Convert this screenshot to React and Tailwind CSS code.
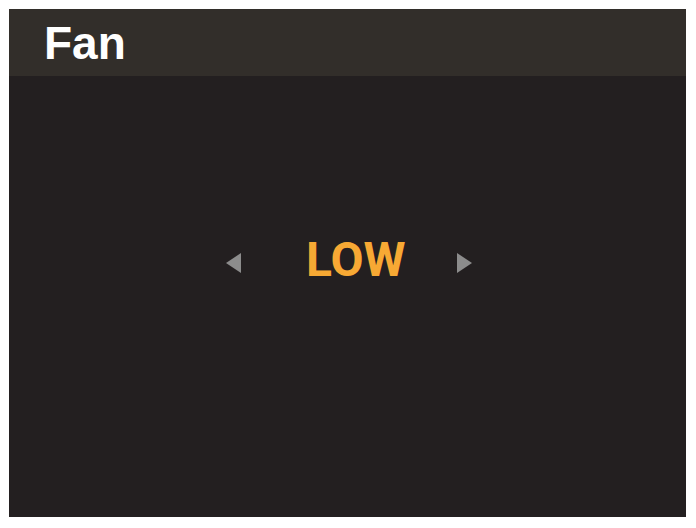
import React from 'react';

const App = () => {
    return (
        <div className="w-[696px] h-[528px] bg-white pt-[9px] pl-[9px] pr-[10px] pb-[11px]">
            <div className="flex h-full flex-col bg-[#231f20]">
                {/* header */}
                <div className="flex h-[67px] items-center bg-[#322e2a] pl-[35px]">
                    <h1 className="font-['Liberation_Sans',sans-serif] text-[46px] font-bold leading-none text-white">Fan</h1>
                </div>

                {/* value selector */}
                <div className="flex-1 pt-[159px]">
                    <div className="flex h-[56px] items-center pl-[217px]">
                        <svg width="15" height="20" viewBox="0 0 15 20" className="shrink-0">
                            <polygon points="15,0 15,20 0,10" fill="#8c8c8c" />
                        </svg>
                        <span className="mb-[6px] ml-[65px] font-['Roboto',sans-serif] text-[48px] font-bold leading-none text-[#f7a934]">LOW</span>
                        <svg width="15" height="20" viewBox="0 0 15 20" className="ml-[51px] shrink-0">
                            <polygon points="0,0 15,10 0,20" fill="#8c8c8c" />
                        </svg>
                    </div>
                </div>
            </div>
        </div>
    );
};

export default App;
